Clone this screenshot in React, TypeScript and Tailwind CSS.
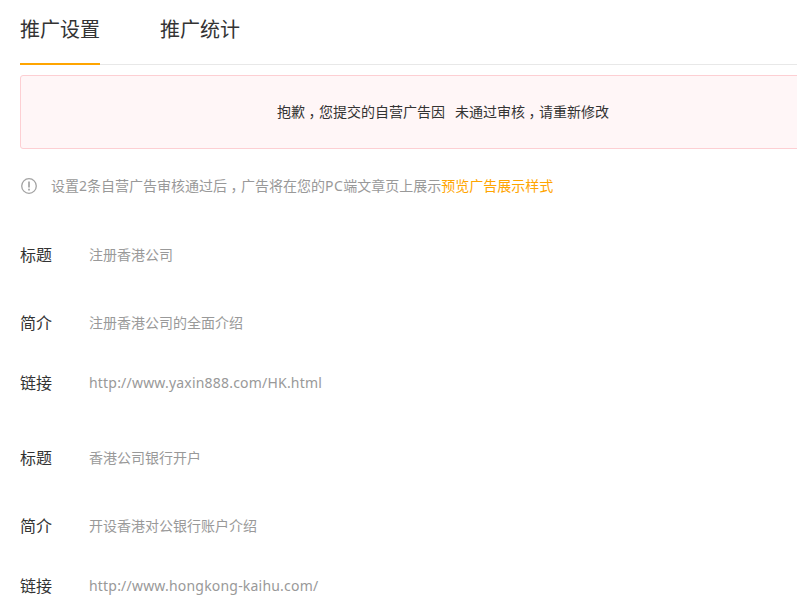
import React from 'react';

const ads = [
  { title: '注册香港公司', intro: '注册香港公司的全面介绍', url: 'http://www.yaxin888.com/HK.html' },
  { title: '香港公司银行开户', intro: '开设香港对公银行账户介绍', url: 'http://www.hongkong-kaihu.com/' },
];

// the comma sits in the middle of its cell in the original font
const Comma = () => <span className="inline-block w-[14px] text-center [font-feature-settings:'halt']">，</span>;

const Row = ({ label, value, className, link }: { label: string; value: string; className: string; link?: boolean }) => (
  <div className={`flex items-center h-[24px] ${className}`}>
    <div className="w-[69px] shrink-0 text-[16px] leading-[24px] text-[#333]">{label}</div>
    <div className={`text-[14px] leading-[24px] text-[#999] ${link ? 'tracking-[0.2px]' : ''}`}>{value}</div>
  </div>
);

export default function App() {
  return (
    <div
      className="w-[797px] h-[602px] overflow-hidden bg-white pl-[20px]"
      style={{ fontFamily: '"Noto Sans", "Noto Sans CJK SC", sans-serif' }}
    >
      <div className="w-[846px]">
        <div className="flex h-[65px] border-b border-[#e8e8e8]">
          <div className="w-[80px] h-[65px] border-b-2 border-[#ffa500] pt-[15px] text-[20px] leading-[30px] text-[#333] whitespace-nowrap">
            推广设置
          </div>
          <div className="ml-[60px] pt-[15px] text-[20px] leading-[30px] text-[#333] whitespace-nowrap">推广统计</div>
        </div>

        <div className="mt-[10px] h-[74px] flex items-center justify-center rounded-[3px] border border-[#fdcfd3] bg-[#fff6f7] text-[14px] leading-[20px] text-[#333]">
          <span>抱歉<Comma />您提交的自营广告因</span>
          <span className="ml-[10px]">未通过审核<Comma />请重新修改</span>
        </div>

        <div className="mt-[25px] h-[24px] flex items-center text-[14px] leading-[20px] text-[#999]">
          <svg className="ml-[1px] w-[16px] h-[16px] shrink-0" viewBox="0 0 16 16" fill="none">
            <circle cx="8" cy="8" r="7.3" stroke="#a3a3a3" strokeWidth="1.3" />
            <rect x="7.15" y="3.5" width="1.7" height="6" fill="#a3a3a3" />
            <rect x="7.15" y="10.7" width="1.7" height="1.8" fill="#a3a3a3" />
          </svg>
          <span className="ml-[14px] whitespace-nowrap">
            设置2条自营广告审核通过后<Comma />广告将在您的<span className="tracking-[0.5px]">PC</span>端文章页上展示<span className="text-[#ffa500]">预览广告展示样式</span>
          </span>
        </div>

        <div className="mt-[45px]">
          {ads.map((ad, i) => (
            <div key={ad.url} className={i > 0 ? 'mt-[51px]' : ''}>
              <Row label="标题" value={ad.title} className="" />
              <Row label="简介" value={ad.intro} className="mt-[44px]" />
              <Row label="链接" value={ad.url} className="mt-[36px]" link />
            </div>
          ))}
        </div>
      </div>
    </div>
  );
}
